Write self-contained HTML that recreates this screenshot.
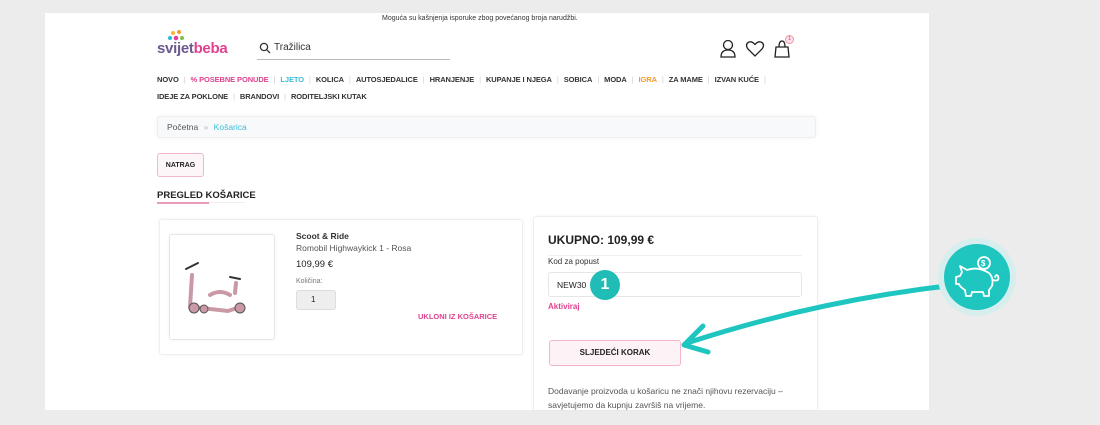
<!DOCTYPE html>
<html><head><meta charset="utf-8"><style>
*{margin:0;padding:0;box-sizing:border-box}
body{width:1100px;height:425px;background:#ececec;font-family:"Liberation Sans",sans-serif;color:#222;position:relative;overflow:hidden}
.panel{position:absolute;left:45px;top:13px;width:884px;height:397px;background:#fff}
.a{position:absolute;white-space:nowrap}
.nav{font-size:7.5px;font-weight:bold;color:#333;letter-spacing:-.1px}
.nav span.s{color:#ccc;margin:0 5px;font-weight:normal}
.card{position:absolute;border:1px solid #eee;border-radius:3px;box-shadow:0 0 3px rgba(0,0,0,.06);background:#fff}
</style></head><body>
<div class="panel"></div>
<div class="a" style="left:382px;top:15px;font-size:7px;color:#333">Moguća su kašnjenja isporuke zbog povećanog broja narudžbi.</div>
<!-- logo -->
<svg class="a" style="left:166px;top:29px" width="22" height="16"><circle cx="7" cy="4" r="2" fill="#f7b733"/><circle cx="13" cy="3" r="2" fill="#f39a2b"/><circle cx="4" cy="9" r="2" fill="#2bb8d6"/><circle cx="10" cy="9" r="2.3" fill="#e0429b"/><circle cx="16" cy="9" r="2" fill="#7cc242"/></svg>
<div class="a" style="left:157px;top:40px;font-size:15px;letter-spacing:-.3px;font-weight:bold"><span style="color:#6b5a8e">svijet</span><span style="color:#e0428f">beba</span></div>
<svg class="a" style="left:259px;top:42px" width="12" height="12"><circle cx="5" cy="5" r="3.6" stroke="#333" stroke-width="1.3" fill="none"/><line x1="7.7" y1="7.7" x2="11" y2="11" stroke="#333" stroke-width="1.3"/></svg>
<div class="a" style="left:274px;top:42px;font-size:10px;color:#333">Tražilica</div>
<div class="a" style="left:257px;top:59px;width:193px;height:1px;background:#bbb"></div>
<!-- icons -->
<svg class="a" style="left:718px;top:38px" width="84" height="22" fill="none" stroke="#222" stroke-width="1.3">
<circle cx="10" cy="7" r="4.5"/><path d="M3 19 Q3 12 10 12 Q17 12 17 19 Z"/>
<path d="M37 18 L30 11 Q27 7 30 4.5 Q33.5 2.5 37 6.5 Q40.5 2.5 44 4.5 Q47 7 44 11 Z"/>
<path d="M58 9 L70 9 L71 19 L57 19 Z M61 9 Q61 3 64 3 Q67 3 67 9"/>
</svg>
<div class="a" style="left:785px;top:35px;width:9px;height:9px;border-radius:50%;background:#fde;border:1px solid #e99;font-size:5px;color:#c44;text-align:center;line-height:7px">1</div>
<!-- nav -->
<div class="a nav" style="left:157px;top:75px">NOVO<span class="s">|</span><span style="color:#e0428f">% POSEBNE PONUDE</span><span class="s">|</span><span style="color:#3bbfd9">LJETO</span><span class="s">|</span>KOLICA<span class="s">|</span>AUTOSJEDALICE<span class="s">|</span>HRANJENJE<span class="s">|</span>KUPANJE I NJEGA<span class="s">|</span>SOBICA<span class="s">|</span>MODA<span class="s">|</span><span style="color:#f39a2b">IGRA</span><span class="s">|</span>ZA MAME<span class="s">|</span>IZVAN KUĆE<span class="s">|</span></div>
<div class="a nav" style="left:157px;top:92px">IDEJE ZA POKLONE<span class="s">|</span>BRANDOVI<span class="s">|</span>RODITELJSKI KUTAK</div>
<!-- breadcrumb -->
<div class="card" style="left:157px;top:116px;width:659px;height:22px;background:#f8f9fb"></div>
<div class="a" style="left:167px;top:122px;font-size:8.5px;color:#555">Početna <span style="color:#bbb;margin:0 3px">»</span> <span style="color:#3bbfd9">Košarica</span></div>
<div class="a" style="left:157px;top:153px;width:47px;height:24px;border:1px solid #f2b6cf;border-radius:3px;background:#fdf6f9;font-size:7px;font-weight:bold;text-align:center;padding-top:8px">NATRAG</div>
<div class="a" style="left:157px;top:190px;font-size:9.5px;font-weight:bold">PREGLED KOŠARICE</div>
<div class="a" style="left:157px;top:202px;width:88px;height:1px;background:#eee"></div>
<div class="a" style="left:157px;top:202px;width:52px;height:2px;background:#e99bbb"></div>
<!-- product card -->
<div class="card" style="left:159px;top:219px;width:364px;height:136px"></div>
<div class="card" style="left:169px;top:234px;width:106px;height:106px;border-color:#e6e6e6"></div>
<svg class="a" style="left:180px;top:255px" width="90" height="70">
<g stroke="#c99aa6" stroke-width="4" fill="none" stroke-linecap="round"><path d="M10 52 L12 20"/><path d="M12 52 L48 56 L60 52"/><path d="M30 40 Q40 34 50 40"/><path d="M55 38 L56 28"/></g>
<g stroke="#333" stroke-width="2" stroke-linecap="round"><path d="M6 14 L18 8"/><path d="M50 22 L60 24"/></g>
<circle cx="14" cy="53" r="5" fill="#c99aa6" stroke="#555"/><circle cx="60" cy="53" r="5" fill="#c99aa6" stroke="#555"/><circle cx="24" cy="54" r="4" fill="#c99aa6" stroke="#555"/></svg>
<div class="a" style="left:296px;top:231px;font-size:8.5px;font-weight:bold;color:#333">Scoot &amp; Ride</div>
<div class="a" style="left:296px;top:243px;font-size:8.5px;color:#555">Romobil Highwaykick 1 - Rosa</div>
<div class="a" style="left:296px;top:259px;font-size:9.5px;color:#222">109,99 €</div>
<div class="a" style="left:296px;top:278px;font-size:7px;color:#777">Količina:</div>
<div class="a" style="left:296px;top:290px;width:40px;height:20px;background:#eee;border:1px solid #ddd;border-radius:3px;font-size:8px;padding:4px 0 0 14px">1</div>
<div class="a" style="left:418px;top:312px;font-size:7.5px;font-weight:bold;color:#e0428f">UKLONI IZ KOŠARICE</div>
<!-- summary -->
<div class="card" style="left:533px;top:216px;width:285px;height:194px;border-bottom:none;border-radius:3px 3px 0 0"></div>
<div class="a" style="left:548px;top:233px;font-size:12px;font-weight:bold">UKUPNO: 109,99 €</div>
<div class="a" style="left:548px;top:255px;width:254px;height:1px;background:#f0f0f0"></div>
<div class="a" style="left:548px;top:257px;font-size:8px;color:#333">Kod za popust</div>
<div class="a" style="left:548px;top:272px;width:254px;height:25px;border:1px solid #e6e6e6;border-radius:3px;font-size:8.5px;padding:7px 0 0 8px">NEW30</div>
<div class="a" style="left:590px;top:270px;width:30px;height:30px;border-radius:50%;background:#1fbdb6;color:#fff;font-weight:bold;font-size:16px;text-align:center;line-height:30px">1</div>
<div class="a" style="left:548px;top:302px;font-size:8px;font-weight:bold;color:#e0428f">Aktiviraj</div>
<div class="a" style="left:549px;top:340px;width:132px;height:26px;border:1px solid #f2b6cf;border-radius:3px;background:#fdf3f7;font-size:8px;font-weight:bold;text-align:center;line-height:24px">SLJEDEĆI KORAK</div>
<div class="a" style="left:548px;top:384px;font-size:8.5px;color:#555;line-height:14px">Dodavanje proizvoda u košaricu ne znači njihovu rezervaciju –<br>savjetujemo da kupnju završiš na vrijeme.</div>
<div class="a" style="left:45px;top:411px;width:900px;height:14px;background:#ececec"></div>
<!-- arrow + piggy -->
<svg class="a" style="left:0;top:0" width="1100" height="425">
<path d="M955 285 Q820 300 690 342" stroke="#1fc6c0" stroke-width="5" fill="none" stroke-linecap="round"/>
<path d="M703 326 L684 345 L708 352" stroke="#1fc6c0" stroke-width="5" fill="none" stroke-linecap="round" stroke-linejoin="round"/>
<circle cx="977" cy="277" r="39" fill="#d6eeed"/>
<circle cx="977" cy="277" r="33" fill="#1fc6c0"/>
<g stroke="#fff" stroke-width="1.8" fill="none" stroke-linecap="round" stroke-linejoin="round">
<circle cx="984" cy="263" r="6"/>
<path d="M962 272 L960 266 L967 270 Q978 266 989 273 Q994 278 992 286 L989 290 L989 296 L984 296 L983 292 L972 292 L971 296 L966 296 L965 290 Q960 287 959 284 L956 284 L956 277 L960 276 Z"/>
<path d="M993 280 Q1000 282 998 276 Q996 274 995 277"/>
</g>
<text x="981" y="266" fill="#fff" font-size="8" font-weight="bold" font-family="Liberation Sans">$</text>
</svg>
</body></html>
